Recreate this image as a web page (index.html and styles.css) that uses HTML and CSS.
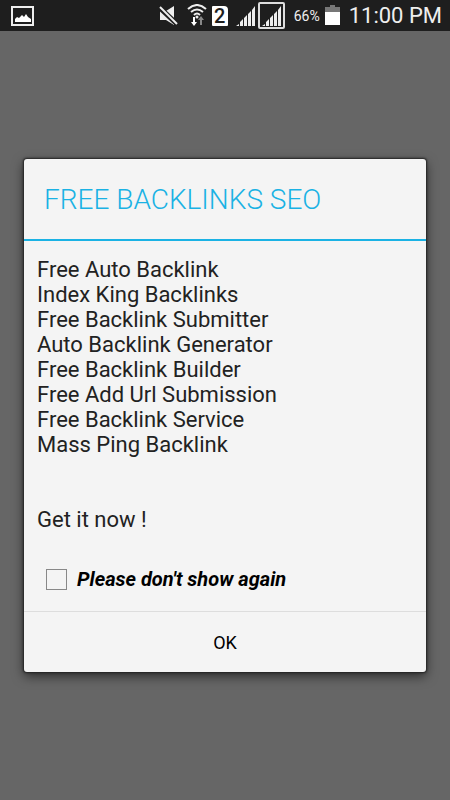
FILE: index.html
```html
<!DOCTYPE html>
<html lang="en">
<head>
    <meta charset="UTF-8">
    <meta name="viewport" content="width=device-width, initial-scale=1.0">
    <title>Free Backlinks SEO</title>
    <link rel="stylesheet" href="styles.css">
</head>
<body>
<header class="status-bar">
    <svg class="icon-picture" width="24" height="20" viewBox="0 0 24 20">
        <rect x="1" y="1" width="21" height="18" fill="none" stroke="#eee" stroke-width="2"/>
        <path d="M4 16v-3l2-2 2 1 3-3 2 2 2-3 2 3 3 2v3z" fill="#fff"/>
    </svg>
    <div class="status-icons">
        <svg width="20" height="20" viewBox="0 0 20 20">
            <path d="M1 5h6l8-5v19l-8-5H1z" fill="#eee"/>
            <path d="M0 1l19 18" stroke="#1e1e1e" stroke-width="5"/>
            <path d="M1 1l17 17" stroke="#eee" stroke-width="2"/>
        </svg>
        <svg class="wifi" width="20" height="24" viewBox="0 0 20 24">
            <path d="M1 5q9-8 18 0M4 8q6-5 12 0M7 11q3-3 6 0" fill="none" stroke="#eee" stroke-width="2"/>
            <circle cx="10" cy="13" r="1.5" fill="#eee"/>
            <path d="M6 13h2v5h2l-3 4-3-4h2z" fill="#fff"/>
            <path d="M13 21v-5h-2l3-4 3 4h-2v5z" fill="#888"/>
        </svg>
        <span class="sim">2</span>
        <svg class="signal" width="20" height="20" viewBox="0 0 20 20">
            <path d="M0 20l3-2v2zM4 20v-4l3-3v7zM8 20v-8l3-3v11zM12 20V8l3-3v15zM16 20V4l3-4v20z" fill="#eee"/>
        </svg>
        <svg width="28" height="28" viewBox="0 0 28 28">
            <rect x="1" y="1" width="25" height="25" rx="1" fill="none" stroke="#ddd" stroke-width="2"/>
            <path d="M4 24l3-2v2zM8 24v-4l3-3v7zM12 24v-8l3-3v11zM16 24V12l3-3v15zM20 24V8l3-4v20z" fill="#eee"/>
        </svg>
        <span class="percent">66%</span>
        <svg width="16" height="21" viewBox="0 0 16 21">
            <path d="M0 2h5V0h5v2h5v6H0z" fill="#777"/>
            <path d="M0 7h15v13H0z" fill="#fff"/>
        </svg>
        <span class="time">11:00 PM</span>
    </div>
</header>
<main>
    <div class="dialog" role="dialog" aria-labelledby="dialogTitle">
        <h1 id="dialogTitle">FREE BACKLINKS SEO</h1>
        <div class="dialog-body">
            <ul class="features">
                <li>Free Auto Backlink</li>
                <li>Index King Backlinks</li>
                <li>Free Backlink Submitter</li>
                <li>Auto Backlink Generator</li>
                <li>Free Backlink Builder</li>
                <li>Free Add Url Submission</li>
                <li>Free Backlink Service</li>
                <li>Mass Ping Backlink</li>
            </ul>
            <p>Get it now !</p>
            <div class="option">
                <input type="checkbox" id="dontShow">
                <label for="dontShow">Please don't show again</label>
            </div>
        </div>
        <button class="btn" type="button">OK</button>
    </div>
</main>
</body>
</html>
```

FILE: styles.css
```css
body {
    font-family: Roboto, sans-serif;
    margin: 0;
    min-height: 100vh;
    display: flex;
    flex-direction: column;
    background-color: #666;
    color: #222;
}

.status-bar {
    display: flex;
    justify-content: space-between;
    align-items: center;
    height: 31px;
    padding: 0 8px 0 11px;
    background-color: #1e1e1e;
    color: #eee;
}

.status-icons {
    display: flex;
    align-items: center;
}

.status-icons svg {
    margin-right: 8px;
}

.status-icons .wifi {
    margin-right: 5px;
}

.sim {
    width: 16px;
    height: 20px;
    margin-right: 8px;
    border-radius: 1px 4px 1px 1px;
    background-color: #fff;
    color: #1e1e1e;
    font-size: 20px;
    font-weight: 500;
    line-height: 21px;
    text-align: center;
}

.status-icons .signal {
    margin-right: 2px;
}

.percent {
    margin-right: 5px;
    font-size: 14px;
}

.time {
    font-size: 22px;
    line-height: 31px;
}

main {
    flex: 1;
    display: flex;
    flex-direction: column;
    justify-content: center;
    padding: 0 24px;
}

.dialog {
    border-radius: 3px;
    background-color: #f4f4f4;
    box-shadow: 0 0 2px 1px #222, 0 4px 12px rgba(0, 0, 0, 0.6);
}

h1 {
    margin: 0;
    padding: 2px 20px 0;
    border-bottom: 2px solid #1ab2e4;
    color: #1ab2e4;
    font-size: 28px;
    font-weight: 300;
    line-height: 78px;
}

.dialog-body {
    padding: 16px 13px 19px;
    font-size: 22px;
    line-height: 25px;
}

.features {
    list-style: none;
    margin: 0 0 50px;
    padding: 0;
}

p {
    margin: 0;
}

.option {
    display: flex;
    align-items: center;
    margin-top: 35px;
    padding-left: 9px;
}

input[type="checkbox"] {
    appearance: none;
    width: 21px;
    height: 21px;
    margin: 0 10px 0 0;
    border: 1px solid #888;
}

input[type="checkbox"]:checked {
    background-color: #1ab2e4;
}

label {
    color: #000;
    font-size: 20px;
    font-style: italic;
    font-weight: bold;
}

.btn {
    display: block;
    width: 100%;
    height: 61px;
    border: none;
    border-top: 1px solid #ddd;
    background-color: transparent;
    color: #000;
    font-family: inherit;
    font-size: 18px;
    cursor: pointer;
}
```
